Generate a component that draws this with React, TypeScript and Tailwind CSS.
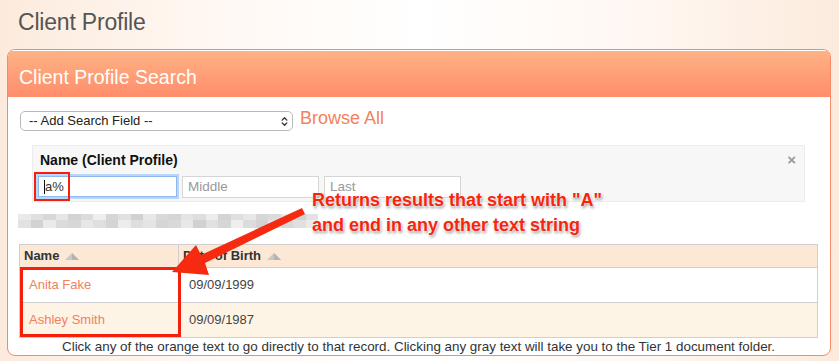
import { ChevronsUpDown } from 'lucide-react';

const font = { fontFamily: '"Liberation Sans", Arial, sans-serif' };

function SortIcon() {
  return (
    <svg width="18" height="9" viewBox="0 0 18 9" className="inline-block ml-[4px]">
      <polygon points="2,8 9,1 16,8" fill="#c8c8c8" />
      <polygon points="9,1 16,8 9,8" fill="#b4b4b4" />
    </svg>
  );
}

const pixels = [
  '#e6e6e6', '#d9d9d9', '#cfcfcf', '#e0e0e0', '#c9c9c9', '#d4d4d4', '#ebebeb', '#cdcdcd',
  '#dadada', '#c6c6c6', '#e3e3e3', '#d0d0d0', '#cbcbcb', '#dedede', '#d6d6d6', '#e8e8e8',
  '#cacaca', '#d8d8d8', '#e2e2e2', '#cecece', '#d3d3d3', '#e5e5e5', '#c8c8c8', '#dcdcdc',
];

export default function App() {
  return (
    <div
      className="w-[839px] h-[361px] overflow-hidden text-[#333] bg-[linear-gradient(90deg,#fcebdd_0%,#fff8f3_25%,#ffffff_50%,#fff8f3_75%,#fcebdd_100%)]"
      style={font}
    >
      <div className="h-[49px] pl-[18px] pt-[5px] text-[23px] text-[#555] tracking-[-0.2px]">
        Client Profile
      </div>

      <div className="ml-[7px] w-[824px] h-[307px] border border-[#f78a68] rounded-[8px] overflow-hidden bg-white flex flex-col">
        <div className="h-[47px] shrink-0 border-t border-white bg-[linear-gradient(180deg,#feb285_0%,#fe8d6b_100%)] pl-[11px] pt-[12px] text-[19.5px] text-white">
          Client Profile Search
        </div>

        <div className="relative flex-1 flex flex-col">
          <div className="flex items-center pt-[13px] pl-[12px] gap-[7px]">
            <div className="w-[273px] h-[20px] border border-[#b9b9b9] rounded-[5px] flex items-center justify-between pl-[8px] pr-[2px] text-[13px] text-[#222] bg-white">
              <span>-- Add Search Field --</span>
              <ChevronsUpDown size={11} strokeWidth={3} className="text-[#333]" />
            </div>
            <span className="text-[18px] text-[#f4825c] -mt-[5px]">Browse All</span>
          </div>

          <div className="ml-[24px] mt-[13px] w-[773px] h-[57px] bg-[#f7f7f7] border border-[#ececec] relative px-[7px] pt-[4px]">
            <div className="text-[14px] font-bold text-[#111]">Name (Client Profile)</div>
            <span className="absolute right-[8px] top-[3px] text-[15px] font-bold text-[#999]">×</span>
            <div className="flex gap-[5px] mt-[5px] -ml-[2px]">
              <div className="relative w-[139px] h-[21px] bg-white border border-[#8fb9ec] shadow-[0_0_0_2px_#b9d5f7] text-[13px] pl-[5px] flex items-center">
                <span className="border-l border-[#111] leading-[14px]">a%</span>
                <div className="absolute -left-[5px] -top-[5px] w-[36px] h-[29px] border-2 border-[#f5200c]" />
              </div>
              <div className="w-[137px] h-[22px] bg-white border border-[#d6d6d6] text-[13.5px] text-[#999] pl-[5px] flex items-center">
                Middle
              </div>
              <div className="w-[137px] h-[22px] bg-white border border-[#d6d6d6] text-[13.5px] text-[#999] pl-[5px] flex items-center">
                Last
              </div>
            </div>
          </div>

          <div className="ml-[10px] mt-[12px] h-[17px] w-[300px] flex flex-col opacity-80">
            <div className="flex h-[6px]">
              {pixels.map((c, i) => (
                <div key={i} className="w-[12.5px] h-full" style={{ backgroundColor: c }} />
              ))}
            </div>
            <div className="flex h-[8px]">
              {pixels.slice().reverse().map((c, i) => (
                <div key={i} className="w-[12.5px] h-full" style={{ backgroundColor: c }} />
              ))}
            </div>
          </div>

          <div className="ml-[11px] mt-[13px] w-[799px] border border-[#cfcfcf] text-[13px]">
            <div className="h-[23px] bg-[#fde8d6] flex items-center border-b border-[#cfcfcf] font-bold text-[#333]">
              <div className="w-[159px] pl-[4px] border-r border-[#cfcfcf] h-full flex items-center">
                Name <SortIcon />
              </div>
              <div className="pl-[4px] flex items-center">
                Date of Birth <SortIcon />
              </div>
            </div>
            <div className="h-[35px] bg-white flex items-center border-b border-[#cfcfcf]">
              <div className="w-[159px] pl-[9px] border-r border-[#cfcfcf] h-full flex items-center text-[#f0805e]">
                Anita Fake
              </div>
              <div className="pl-[10px] text-[#444]">09/09/1999</div>
            </div>
            <div className="h-[34px] bg-[#fef4e6] flex items-center">
              <div className="w-[159px] pl-[9px] border-r border-[#cfcfcf] h-full flex items-center text-[#f0805e]">
                Ashley Smith
              </div>
              <div className="pl-[10px] text-[#444]">09/09/1987</div>
            </div>
          </div>

          <div className="text-[13.4px] text-[#333] pl-[54px] leading-[15px] mt-[1px]">
            Click any of the orange text to go directly to that record. Clicking any gray text will take you to the Tier 1 document folder.
          </div>

          {/* annotation overlay */}
          <div className="absolute left-[12px] top-[170px] w-[161px] h-[70px] border-[3px] border-[#f5200c]" />
          <svg
            className="absolute left-0 top-0 pointer-events-none"
            width="824"
            height="260"
            viewBox="0 0 824 260"
          >
            <polygon points="294,111 297,117 197,166 201,178 164,175 188,148 193,158" fill="#f52a10" />
          </svg>
          <div
            className="absolute left-[304px] top-[91px] text-[18px] font-bold text-[#f5260c] leading-[25px] [text-shadow:0_0_2px_#fff,0_0_2px_#fff,1px_2px_3px_rgba(0,0,0,0.45)]"
          >
            <div>Returns results that start with "A"</div>
            <div>and end in any other text string</div>
          </div>
        </div>
      </div>
    </div>
  );
}
